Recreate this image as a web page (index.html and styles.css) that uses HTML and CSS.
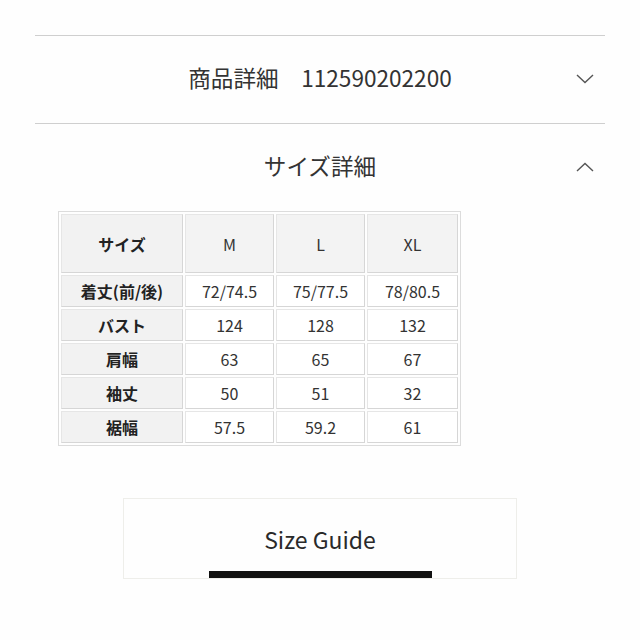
FILE: index.html
```html
<!DOCTYPE html>
<html lang="ja">
<head>
<meta charset="utf-8">
<link rel="stylesheet" href="styles.css">
</head>
<body>
<div class="page">
  <div class="acc">
    <div class="acc-head">
      <span class="acc-title">商品詳細　112590202200</span>
      <svg class="chev" width="18" height="10" viewBox="0 0 18 10"><polyline points="1,1 9,8.5 17,1" fill="none" stroke="#555" stroke-width="1.4"/></svg>
    </div>
  </div>
  <div class="acc open">
    <div class="acc-head">
      <span class="acc-title">サイズ詳細</span>
      <svg class="chev" width="18" height="10" viewBox="0 0 18 10"><polyline points="1,9 9,1.5 17,9" fill="none" stroke="#555" stroke-width="1.4"/></svg>
    </div>
    <div class="acc-body">
      <table class="size-table">
        <colgroup><col class="c1"><col class="c2"><col class="c2"><col class="c4"></colgroup>
        <tr class="hrow"><th>サイズ</th><td class="h">M</td><td class="h">L</td><td class="h">XL</td></tr>
        <tr><th>着丈(前/後)</th><td>72/74.5</td><td>75/77.5</td><td>78/80.5</td></tr>
        <tr><th>バスト</th><td>124</td><td>128</td><td>132</td></tr>
        <tr><th>肩幅</th><td>63</td><td>65</td><td>67</td></tr>
        <tr><th>袖丈</th><td>50</td><td>51</td><td>32</td></tr>
        <tr><th>裾幅</th><td>57.5</td><td>59.2</td><td>61</td></tr>
      </table>
    </div>
  </div>
  <div class="guide-wrap">
    <div class="guide">
      <span class="guide-text">Size Guide</span>
      <span class="guide-bar"></span>
    </div>
  </div>
</div>
</body>
</html>
```

FILE: styles.css
```css
html, body {
  margin: 0;
  padding: 0;
  background: #fefefe;
}
body {
  font-family: "Noto Sans CJK JP", "Noto Sans", sans-serif;
  color: #333;
}
.page {
  width: 570px;
  margin: 0 0 0 35px;
  padding-top: 35px;
}
.acc {
  border-top: 1px solid #cfcfcf;
}
.acc-head {
  height: 87px;
  display: flex;
  align-items: center;
  justify-content: center;
  position: relative;
}
.acc-title {
  font-size: 22.6px;
  line-height: 1;
  color: #333;
  margin-top: -3px;
}
.chev {
  position: absolute;
  right: 11px;
  top: 38px;
}
.acc-body {
  padding-left: 23px;
}
.size-table {
  width: 403px;
  border: 1px solid #dcdcdc;
  border-spacing: 2px;
  border-collapse: separate;
  table-layout: fixed;
}
.c1 { width: 122px; }
.c2 { width: 89px; }
.c4 { width: 91px; }
.size-table th,
.size-table td {
  height: 32px;
  padding: 0;
  text-align: center;
  vertical-align: middle;
  font-size: 16px;
  line-height: 1;
  border: 1px solid #e6e6e6;
  border-right-color: #d6d6d6;
  border-bottom-color: #d6d6d6;
  box-sizing: border-box;
}
.size-table th {
  background: #f2f2f2;
  font-weight: 700;
  color: #222;
}
.size-table td {
  background: #fff;
  color: #333;
}
.size-table td.h {
  background: #f3f3f3;
}
.size-table tr.hrow th,
.size-table tr.hrow td {
  height: 59px;
}
.guide-wrap {
  display: flex;
  justify-content: center;
  padding-top: 52px;
}
.guide {
  width: 394px;
  height: 81px;
  box-sizing: border-box;
  border: 1px solid #eeeeea;
  display: flex;
  flex-direction: column;
  align-items: center;
  justify-content: flex-end;
}
.guide-text {
  font-size: 23px;
  line-height: 1;
  color: #2a2a2a;
  margin-bottom: 20px;
}
.guide-bar {
  width: 223px;
  height: 7px;
  background: #111;
}
```
